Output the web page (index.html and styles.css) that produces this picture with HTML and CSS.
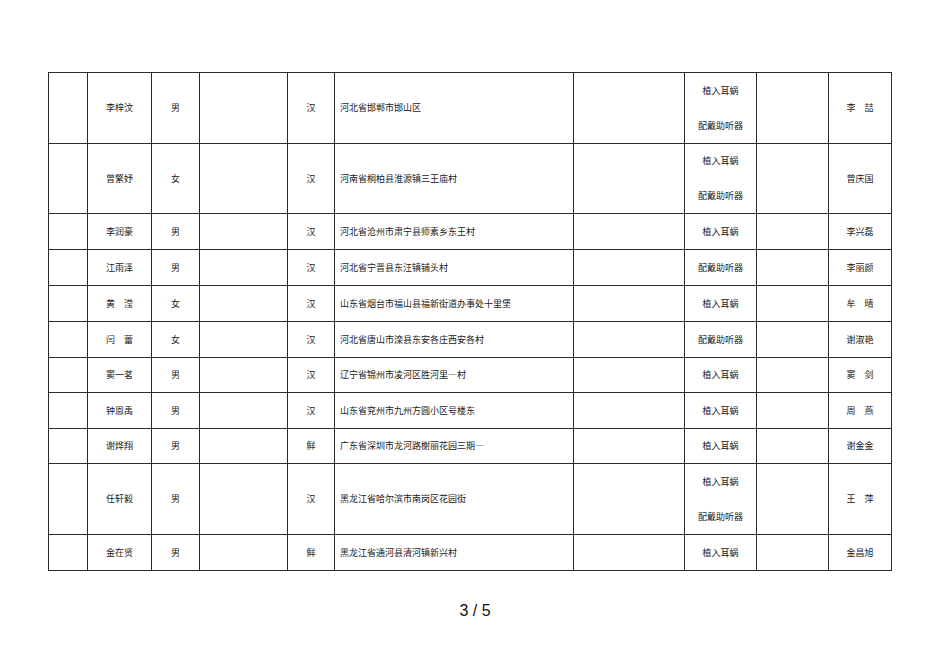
FILE: index.html
```html
<!DOCTYPE html>
<html lang="zh">
<head>
<meta charset="utf-8">
<link rel="stylesheet" href="styles.css">
</head>
<body>
<div class="page">
<table class="roster">
<colgroup>
<col class="c1"><col class="c2"><col class="c3"><col class="c4"><col class="c5"><col class="c6"><col class="c7"><col class="c8"><col class="c9"><col class="c10">
</colgroup>
<tbody>
<tr class="h71"><td></td><td>李梓汶</td><td>男</td><td></td><td>汉</td><td class="addr">河北省邯郸市邯山区</td><td></td><td><div class="two"><span>植入耳蜗</span><span>配戴助听器</span></div></td><td></td><td>李　喆</td></tr>
<tr class="h70"><td></td><td>曾繁妤</td><td>女</td><td></td><td>汉</td><td class="addr">河南省桐柏县淮源镇三王庙村</td><td></td><td><div class="two"><span>植入耳蜗</span><span>配戴助听器</span></div></td><td></td><td>曾庆国</td></tr>
<tr class="h36"><td></td><td>李润豪</td><td>男</td><td></td><td>汉</td><td class="addr">河北省沧州市肃宁县师素乡东王村</td><td></td><td>植入耳蜗</td><td></td><td>李兴磊</td></tr>
<tr class="h36"><td></td><td>江雨泽</td><td>男</td><td></td><td>汉</td><td class="addr">河北省宁晋县东汪镇铺头村</td><td></td><td>配戴助听器</td><td></td><td>李丽颜</td></tr>
<tr class="h36"><td></td><td>黄　滢</td><td>女</td><td></td><td>汉</td><td class="addr">山东省烟台市福山县福新街道办事处十里堡</td><td></td><td>植入耳蜗</td><td></td><td>牟　晴</td></tr>
<tr class="h36"><td></td><td>闫　蕾</td><td>女</td><td></td><td>汉</td><td class="addr">河北省唐山市滦县东安各庄西安各村</td><td></td><td>配戴助听器</td><td></td><td>谢淑艳</td></tr>
<tr class="h35"><td></td><td>窦一茗</td><td>男</td><td></td><td>汉</td><td class="addr">辽宁省锦州市凌河区胜河里—村</td><td></td><td>植入耳蜗</td><td></td><td>窦　剑</td></tr>
<tr class="h36"><td></td><td>钟恩禹</td><td>男</td><td></td><td>汉</td><td class="addr">山东省兖州市九州方圆小区号楼东</td><td></td><td>植入耳蜗</td><td></td><td>周　燕</td></tr>
<tr class="h35"><td></td><td>谢烨翔</td><td>男</td><td></td><td>鲜</td><td class="addr">广东省深圳市龙河路榭丽花园三期—</td><td></td><td>植入耳蜗</td><td></td><td>谢金金</td></tr>
<tr class="h71"><td></td><td>任轩毅</td><td>男</td><td></td><td>汉</td><td class="addr">黑龙江省哈尔滨市南岗区花园街</td><td></td><td><div class="two"><span>植入耳蜗</span><span>配戴助听器</span></div></td><td></td><td>王　萍</td></tr>
<tr class="h36"><td></td><td>金在贤</td><td>男</td><td></td><td>鲜</td><td class="addr">黑龙江省通河县清河镇新兴村</td><td></td><td>植入耳蜗</td><td></td><td>金昌旭</td></tr>
</tbody>
</table>
<div class="pagenum">3 / 5</div>
</div>
</body>
</html>
```
FILE: styles.css
```css
html, body {
  margin: 0;
  padding: 0;
  background: #ffffff;
}
.page {
  width: 950px;
  height: 672px;
  padding-top: 72px;
  box-sizing: border-box;
}
.roster {
  margin-left: 48px;
  width: 844px;
  border-collapse: collapse;
  table-layout: fixed;
  font-family: "Noto Sans CJK SC", "Noto Sans", sans-serif;
  font-size: 9px;
  color: #222;
}
.c1 { width: 39px; }
.c2 { width: 64px; }
.c3 { width: 48px; }
.c4 { width: 88px; }
.c5 { width: 47px; }
.c6 { width: 239px; }
.c7 { width: 111px; }
.c8 { width: 72px; }
.c9 { width: 72px; }
.c10 { width: 63px; }
.roster td {
  border: 1px solid #2a2a2a;
  padding: 0;
  text-align: center;
  vertical-align: middle;
  line-height: 12px;
  white-space: nowrap;
  overflow: hidden;
}
.roster td.addr {
  text-align: left;
  padding-left: 5px;
}
.h71 { height: 71px; }
.h70 { height: 70px; }
.h36 { height: 36px; }
.h35 { height: 35px; }
.two {
  display: flex;
  flex-direction: column;
  align-items: center;
  gap: 23px;
}
.pagenum {
  margin-top: 31px;
  text-align: center;
  font-family: "Liberation Sans", Arial, sans-serif;
  font-size: 16px;
  color: #111;
}
```
